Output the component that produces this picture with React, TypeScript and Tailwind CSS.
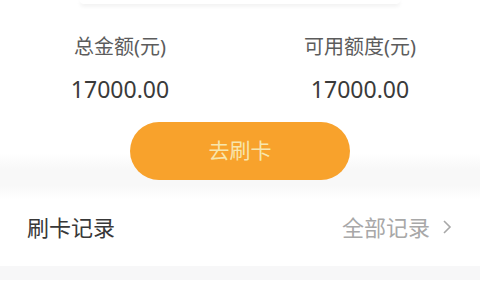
import React from "react";

export default function App() {
  const font = { fontFamily: '"Noto Sans", "Noto Sans CJK SC", sans-serif' };
  return (
    <div className="w-[480px] h-[300px] bg-white overflow-hidden relative" style={font}>
      {/* top card stub */}
      <div className="h-[4px] mx-[80px] bg-white rounded-b-md shadow-[0_2px_4px_rgba(0,0,0,0.07)]" />
      <div className="grid grid-cols-2 pt-[33px]">
        <div className="flex flex-col items-center">
          <div className="h-[20px] leading-[20px] text-[20px] text-[#5c5c5c]">总金额(元)</div>
          <div className="mt-[18px] h-[28px] leading-[28px] text-[23px] text-[#3a3a3a]">17000.00</div>
        </div>
        <div className="flex flex-col items-center">
          <div className="h-[20px] leading-[20px] text-[20px] text-[#5c5c5c]">可用额度(元)</div>
          <div className="mt-[18px] h-[28px] leading-[28px] text-[23px] text-[#3a3a3a]">17000.00</div>
        </div>
      </div>
      <div className="mt-[19px] h-[78px] flex justify-center bg-[linear-gradient(to_bottom,#ffffff_0%,#ffffff_40%,#f8f8f8_60%,#f8f8f8_82%,#ffffff_100%)]">
        <div className="w-[220px] h-[58px] rounded-full bg-[#f8a22c] flex items-center justify-center text-[21px] text-[#f7e6ad]">
          去刷卡
        </div>
      </div>
      <div className="h-[52px] flex items-center justify-between pl-[27px] pr-[28px] mt-[1px]">
        <span className="text-[22px] text-[#383838]">刷卡记录</span>
        <span className="flex items-center gap-[12px] text-[22px] text-[#a8a8a8]">
          全部记录
          <svg width="10" height="16" viewBox="0 0 10 16" fill="none">
            <path d="M2 2 L8 8 L2 14" stroke="#a8a8a8" strokeWidth="1.6" />
          </svg>
        </span>
      </div>
      <div className="mt-[13px] h-[14px] bg-[#f7f7f8]" />
    </div>
  );
}
